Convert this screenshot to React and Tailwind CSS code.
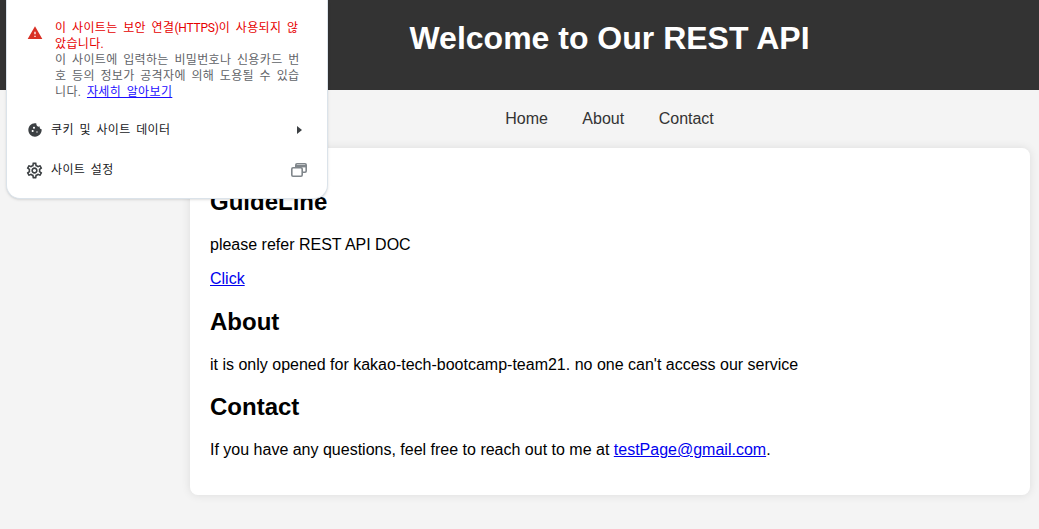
// App.jsx
const GEAR =
  "M19.43 12.98c.04-.32.07-.64.07-.98 0-.34-.03-.66-.07-.98l2.11-1.65c.19-.15.24-.42.12-.64l-2-3.46c-.09-.16-.26-.25-.44-.25-.06 0-.12.01-.17.03l-2.49 1c-.52-.4-1.08-.73-1.69-.98l-.38-2.65C14.46 2.18 14.25 2 14 2h-4c-.25 0-.46.18-.49.42l-.38 2.65c-.61.25-1.17.59-1.69.98l-2.49-1c-.06-.02-.12-.03-.18-.03-.17 0-.34.09-.43.25l-2 3.46c-.13.22-.07.49.12.64l2.11 1.65c-.04.32-.07.65-.07.98 0 .33.03.66.07.98l-2.11 1.65c-.19.15-.24.42-.12.64l2 3.46c.09.16.26.25.44.25.06 0 .12-.01.17-.03l2.49-1c.52.4 1.08.73 1.69.98l.38 2.65c.03.24.24.42.49.42h4c.25 0 .46-.18.49-.42l.38-2.65c.61-.25 1.17-.59 1.69-.98l2.49 1c.06.02.12.03.18.03.17 0 .34-.09.43-.25l2-3.46c.12-.22.07-.49-.12-.64l-2.11-1.65zm-1.98-1.71c.04.31.05.52.05.73 0 .21-.02.43-.05.73l-.14 1.13.89.7 1.08.84-.7 1.21-1.27-.51-1.04-.42-.9.68c-.43.32-.84.56-1.25.73l-1.06.43-.16 1.13-.2 1.35h-1.4l-.19-1.35-.16-1.13-1.06-.43c-.43-.18-.83-.41-1.23-.71l-.91-.7-1.06.43-1.27.51-.7-1.21 1.08-.84.89-.7-.14-1.13c-.03-.31-.05-.54-.05-.74s.02-.43.05-.73l.14-1.13-.89-.7-1.08-.84.7-1.21 1.27.51 1.04.42.9-.68c.43-.32.84-.56 1.25-.73l1.06-.43.16-1.13.2-1.35h1.39l.19 1.35.16 1.13 1.06.43c.43.18.83.41 1.23.71l.91.7 1.06-.43 1.27-.51.7 1.21-1.07.85-.89.7.14 1.13zM12 8c-2.21 0-4 1.79-4 4s1.79 4 4 4 4-1.79 4-4-1.79-4-4-4zm0 6c-1.1 0-2-.9-2-2s.9-2 2-2 2 .9 2 2-.9 2-2 2z";
const COOKIE =
  "M21.95 10.99c-1.79-.03-3.7-1.95-2.68-4.22-2.97 1-5.78-1.59-5.19-4.56C7.11.74 2 6.41 2 12c0 5.52 4.48 10 10 10 5.89 0 10.54-5.08 9.95-11.01zM8.5 15c-.83 0-1.5-.67-1.5-1.5S7.67 12 8.5 12s1.5.67 1.5 1.5S9.33 15 8.5 15zm2-5C9.67 10 9 9.33 9 8.5S9.67 7 10.5 7s1.5.67 1.5 1.5-.67 1.5-1.5 1.5zm4.5 6c-.55 0-1-.45-1-1s.45-1 1-1 1 .45 1 1-.45 1-1 1z";

function SitePopup() {
  return (
    <div className="absolute left-[6px] top-0 w-[322px] h-[199px] bg-white rounded-b-[14px] border border-t-0 border-[#dbe3ea] shadow-sm font-['Roboto','Noto_Sans_CJK_KR',sans-serif] text-[12px] leading-[16px] tracking-[0.35px] [word-spacing:2.3px]">
      <div className="flex pt-[20px] pl-[20px] pr-[21px]">
        <svg className="mt-[5px] shrink-0" width="16" height="16" viewBox="0 0 24 24" fill="#d93025">
          <path d="M1 21h22L12 2 1 21zm12-3h-2v-2h2v2zm0-4h-2v-4h2v4z" />
        </svg>
        <p className="ml-[12px] text-[#5f6368] break-all">
          <span className="text-[#e60000]">
            이 사이트는 보안 연결<span className="tracking-[-0.2px]">(HTTPS)</span>이 사용되지 않았습니다.
          </span>
          <br />
          이 사이트에 입력하는 비밀번호나 신용카드 번호 등의 정보가 공격자에 의해 도용될 수 있습니다.{" "}
          <a href="#" className="text-[#1a0dff] underline">자세히 알아보기</a>
        </p>
      </div>
      <div className="flex items-center mt-[20px] pl-[20px] pr-[25px] h-[20px] text-[#202124]">
        <svg width="16" height="16" viewBox="0 0 24 24" fill="#3c4043" fillRule="evenodd">
          <path d={COOKIE} />
        </svg>
        <span className="ml-[8px] flex-1">쿠키 및 사이트 데이터</span>
        <svg width="5" height="8" viewBox="0 0 5 8" fill="#3c4043">
          <path d="M0 0l5 4-5 4z" />
        </svg>
      </div>
      <div className="flex items-center mt-[20px] pl-[18px] pr-[20px] h-[20px] text-[#202124]">
        <svg width="19" height="19" viewBox="0 0 24 24" fill="#3c4043">
          <path d={GEAR} />
        </svg>
        <span className="ml-[7px] flex-1">사이트 설정</span>
        <svg width="16" height="14" viewBox="0 0 16 14" fill="none" stroke="#80868b" strokeWidth="1.6">
          <rect x="0.8" y="4.8" width="10.4" height="8.4" rx="1.2" />
          <path d="M4.8 4V2a1.2 1.2 0 0 1 1.2-1.2h8A1.2 1.2 0 0 1 15.2 2v6A1.2 1.2 0 0 1 14 9.2h-2.8" />
          <path d="M5 3.2h10" strokeWidth="2.4" />
        </svg>
      </div>
    </div>
  );
}

export default function App() {
  return (
    <div className="relative min-h-[529px] bg-[#f4f4f4] font-['Liberation_Sans',Arial,sans-serif] text-[16px] leading-[18.4px] text-black">
      <header className="h-[90px] bg-[#333333] flex items-center justify-center pl-[180px] pb-[13px]">
        <h1 className="text-[32px] leading-[37px] font-bold text-white">Welcome to Our REST API</h1>
      </header>
      <nav className="h-[58px] flex items-start justify-center gap-[34.5px] pl-[180px] pt-[20px] text-[#333333]">
        <a href="#">Home</a>
        <a href="#">About</a>
        <a href="#">Contact</a>
      </nav>
      <main className="ml-[190px] mr-[9px] bg-white rounded-[8px] shadow-[0_0_10px_rgba(0,0,0,0.1)] px-[20px] pt-[40px] pb-[36px]">
        <h2 className="text-[24px] leading-[27.6px] font-bold mb-[20px]">GuideLine</h2>
        <p className="mb-[16px]">please refer REST API DOC</p>
        <p className="mb-[20px]"><a href="#" className="text-[#0000ee] underline">Click</a></p>
        <h2 className="text-[24px] leading-[27.6px] font-bold mb-[20px]">About</h2>
        <p className="mb-[19px]">it is only opened for kakao-tech-bootcamp-team21. no one can't access our service</p>
        <h2 className="text-[24px] leading-[27.6px] font-bold mb-[20px]">Contact</h2>
        <p>
          If you have any questions, feel free to reach out to me at{" "}
          <a href="#" className="text-[#0000ee] underline">testPage@gmail.com</a>.
        </p>
      </main>
      <SitePopup />
    </div>
  );
}
